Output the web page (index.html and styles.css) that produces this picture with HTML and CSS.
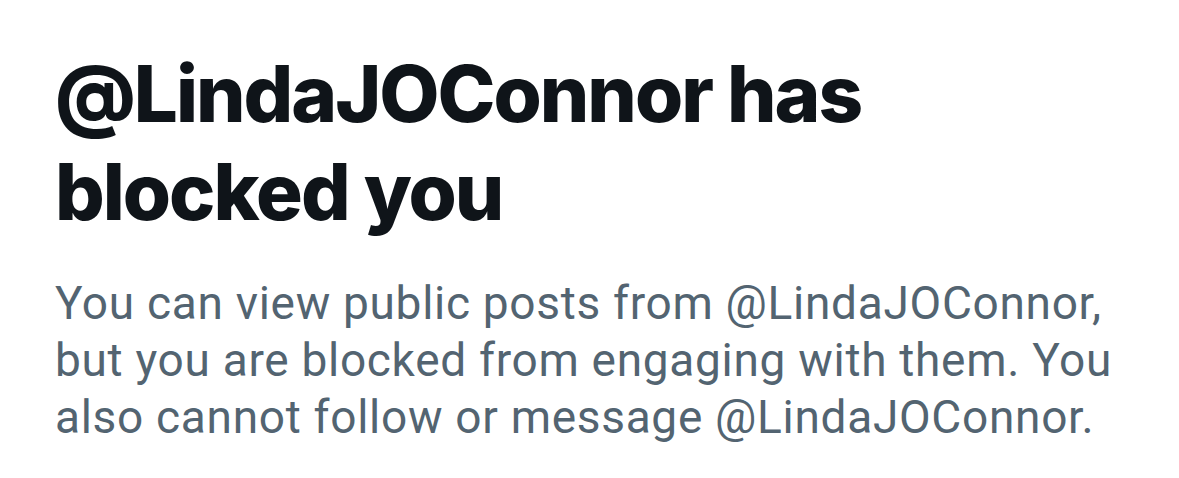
FILE: index.html
```html
<!DOCTYPE html>
<html lang="en">
<head>
    <meta charset="UTF-8">
    <title>Blocked</title>
    <link rel="stylesheet" href="styles.css">
</head>
<body>
    <div class="notice">
        <h1 class="notice-title">@LindaJOConnor has blocked you</h1>
        <p class="notice-text">You can view public posts from @LindaJOConnor, but you are blocked from engaging with them. You also cannot follow or message @LindaJOConnor.</p>
    </div>
</body>
</html>
```
FILE: styles.css
```css
* {
    margin: 0; padding: 0;
    box-sizing: border-box;
}
body {
    background: #ffffff;
    font-family: Inter, 'Noto Sans', sans-serif;
}
.notice {
    padding: 45px 0 0 55px;
    width: 1179px;
}
.notice-title {
    color: #0f1419;
    font-size: 78px;
    font-weight: 800;
    line-height: 98px;
    letter-spacing: -2px;
    max-width: 900px;
}
.notice-text {
    color: #536471;
    font-family: Roboto, 'Noto Sans', sans-serif;
    font-size: 46px;
    font-weight: 400;
    line-height: 57px;
    letter-spacing: 0.7px;
    margin-top: 34px;
    max-width: 1100px;
}
```
